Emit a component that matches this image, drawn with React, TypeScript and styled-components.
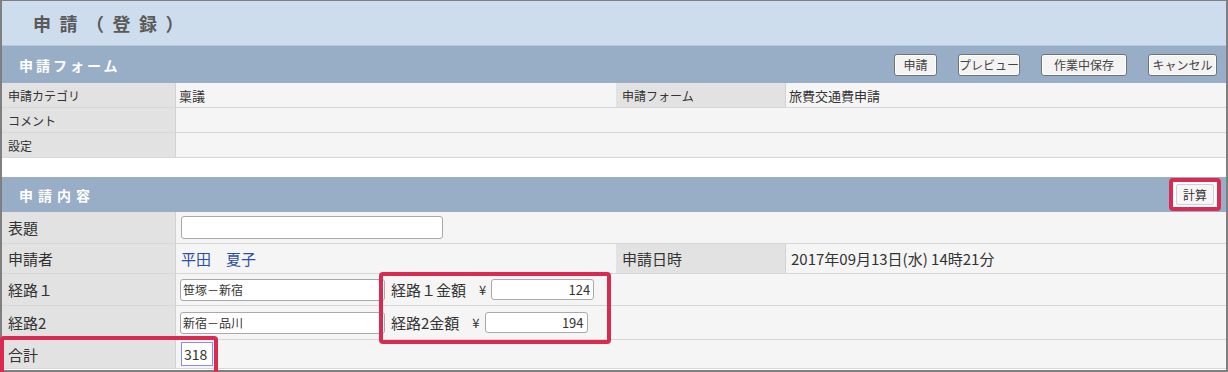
import React from "react";
import styled, { createGlobalStyle } from "styled-components";

const Global = createGlobalStyle`
  html, body { margin: 0; padding: 0; background: #fff; overflow: hidden; }
  body { font-family: "Noto Sans CJK JP", "Noto Sans", sans-serif; }
  * { box-sizing: border-box; }
`;

const Frame = styled.div`
  position: relative;
  width: 1228px;
  height: 372px;
  border: 2px solid #7f7f7f;
  border-top-width: 1px;
  background: #fff;
  display: flex;
  flex-direction: column;
`;

const TitleBar = styled.div`
  height: 45px;
  flex: none;
  border-bottom: 1px solid #b9c9da;
  background: #cedded;
  display: flex;
  align-items: center;
  padding-left: 31px;
  font-size: 18px;
  font-weight: 700;
  color: #5a5a5a;
  letter-spacing: 8.5px;
`;

const SectionHeader = styled.div<{ $h: number }>`
  height: ${(p) => p.$h}px;
  flex: none;
  background: #98adc6;
  display: flex;
  align-items: center;
  justify-content: space-between;
  padding: 0 9px 0 17px;
`;

const SectionTitle = styled.span<{ $spacing: number }>`
  color: #fff;
  font-weight: 700;
  font-size: 14px;
  letter-spacing: ${(p) => p.$spacing}px;
`;

const ButtonBar = styled.div`
  display: flex;
  gap: 21px;
`;

const HeaderButton = styled.button<{ $w: number }>`
  width: ${(p) => p.$w}px;
  height: 22px;
  padding: 0;
  border: 1px solid #6f7378;
  border-radius: 3px;
  background: #f3f3f3;
  box-shadow: inset 0 0 0 1px #fff;
  font-family: inherit;
  font-size: 12px;
  color: #444;
  display: flex;
  align-items: center;
  justify-content: center;
`;

const CalcHighlight = styled.div`
  border: 4px solid #d92b52;
  border-radius: 4px;
  padding: 2px 3px;
  margin-right: -4px;
  background: #fff;
`;

const CalcButton = styled.button`
  width: 38px;
  height: 21px;
  padding: 0;
  border: 1px solid #d0d0d0;
  border-radius: 2px;
  background: #f6f6f6;
  font-family: inherit;
  font-size: 12px;
  color: #333;
  display: flex;
  align-items: center;
  justify-content: center;
`;

const Row = styled.div<{ $h: number; $cols: string }>`
  position: relative;
  flex: none;
  display: grid;
  grid-template-columns: ${(p) => p.$cols};
  height: ${(p) => p.$h}px;
  border-bottom: 1px solid #d7d7d7;
`;

const Label = styled.div<{ $size: number }>`
  background: #e2e2e2;
  border-right: 1px solid #d2d2d2;
  display: flex;
  align-items: center;
  padding-left: 6px;
  font-size: ${(p) => p.$size}px;
  color: #333;
  white-space: nowrap;
`;

const Value = styled.div<{ $size: number; $pad: number }>`
  background: #f5f5f5;
  display: flex;
  align-items: center;
  padding-left: ${(p) => p.$pad}px;
  font-size: ${(p) => p.$size}px;
  color: #333;
  white-space: nowrap;
`;

const Gap = styled.div`
  height: 19px;
  flex: none;
  background: #fff;
`;

const NameLink = styled.span`
  color: #2f4fa6;
`;

const TextInput = styled.input<{ $w: number; $h: number }>`
  width: ${(p) => p.$w}px;
  height: ${(p) => p.$h}px;
  border: 1px solid #a9a9a9;
  border-radius: 3px;
  background: #fff;
  padding: 0 2px;
  font-family: inherit;
  font-size: 12px;
  color: #333;
  outline: none;
`;

const AmountGroup = styled.div`
  display: flex;
  align-items: center;
  margin-left: 6px;
`;

const AmountLabel = styled.span`
  font-size: 15px;
  color: #333;
  margin-right: 13px;
`;

const Yen = styled.span`
  font-size: 13px;
  color: #333;
  margin-right: 5px;
`;

const AmountInput = styled.input`
  width: 103px;
  height: 21px;
  border: 1px solid #a9a9a9;
  border-radius: 3px;
  background: #fff;
  padding: 0 3px;
  text-align: right;
  font-family: inherit;
  font-size: 13px;
  color: #333;
  outline: none;
`;

const TotalInput = styled.input`
  width: 32px;
  height: 24px;
  border: 1px solid #8b8bef;
  background: #fff;
  padding: 0 2px;
  font-family: inherit;
  font-size: 14px;
  color: #333;
  outline: none;
`;

const Highlight = styled.div<{ $left: number; $top: number; $w: number; $h: number }>`
  position: absolute;
  left: ${(p) => p.$left}px;
  top: ${(p) => p.$top}px;
  width: ${(p) => p.$w}px;
  height: ${(p) => p.$h}px;
  border: 4px solid #d92b52;
  border-radius: 4px;
  pointer-events: none;
  z-index: 2;
`;

const FOUR = "174px 440px 170px 1fr";
const TWO = "174px 1fr";

export default function App() {
  return (
    <>
      <Global />
      <Frame>
        <TitleBar>申請（登録）</TitleBar>

        <SectionHeader $h={37}>
          <SectionTitle $spacing={3}>申請フォーム</SectionTitle>
          <ButtonBar>
            <HeaderButton $w={43}>申請</HeaderButton>
            <HeaderButton $w={62}>プレビュー</HeaderButton>
            <HeaderButton $w={86}>作業中保存</HeaderButton>
            <HeaderButton $w={69}>キャンセル</HeaderButton>
          </ButtonBar>
        </SectionHeader>

        <Row $h={25} $cols={FOUR}>
          <Label $size={12}>申請カテゴリ</Label>
          <Value $size={13} $pad={3}>稟議</Value>
          <Label $size={12}>申請フォーム</Label>
          <Value $size={13} $pad={3}>旅費交通費申請</Value>
        </Row>
        <Row $h={25} $cols={TWO}>
          <Label $size={12}>コメント</Label>
          <Value $size={13} $pad={3} />
        </Row>
        <Row $h={25} $cols={TWO}>
          <Label $size={12}>設定</Label>
          <Value $size={13} $pad={3} />
        </Row>

        <Gap />

        <SectionHeader $h={35}>
          <SectionTitle $spacing={5}>申請内容</SectionTitle>
          <CalcHighlight>
            <CalcButton>計算</CalcButton>
          </CalcHighlight>
        </SectionHeader>

        <Row $h={32} $cols={TWO}>
          <Label $size={15}>表題</Label>
          <Value $size={15} $pad={5}>
            <TextInput $w={262} $h={23} />
          </Value>
        </Row>
        <Row $h={30} $cols={FOUR}>
          <Label $size={15}>申請者</Label>
          <Value $size={15} $pad={5}>
            <NameLink>平田　夏子</NameLink>
          </Value>
          <Label $size={15}>申請日時</Label>
          <Value $size={15} $pad={5}>2017年09月13日(水) 14時21分</Value>
        </Row>
        <Row $h={32} $cols={TWO}>
          <Label $size={15}>経路１</Label>
          <Value $size={15} $pad={4}>
            <TextInput $w={205} $h={22} defaultValue="笹塚－新宿" />
            <AmountGroup>
              <AmountLabel>経路１金額</AmountLabel>
              <Yen>¥</Yen>
              <AmountInput defaultValue="124" />
            </AmountGroup>
          </Value>
          <Highlight $left={377} $top={-2} $w={232} $h={72} />
        </Row>
        <Row $h={34} $cols={TWO}>
          <Label $size={15}>経路2</Label>
          <Value $size={15} $pad={4}>
            <TextInput $w={205} $h={22} defaultValue="新宿－品川" />
            <AmountGroup>
              <AmountLabel>経路2金額</AmountLabel>
              <Yen>¥</Yen>
              <AmountInput defaultValue="194" />
            </AmountGroup>
          </Value>
        </Row>
        <Row $h={29} $cols={TWO}>
          <Label $size={15}>合計</Label>
          <Value $size={15} $pad={5}>
            <TotalInput defaultValue="318" />
          </Value>
          <Highlight $left={-2} $top={-4} $w={218} $h={44} />
        </Row>
      </Frame>
    </>
  );
}
